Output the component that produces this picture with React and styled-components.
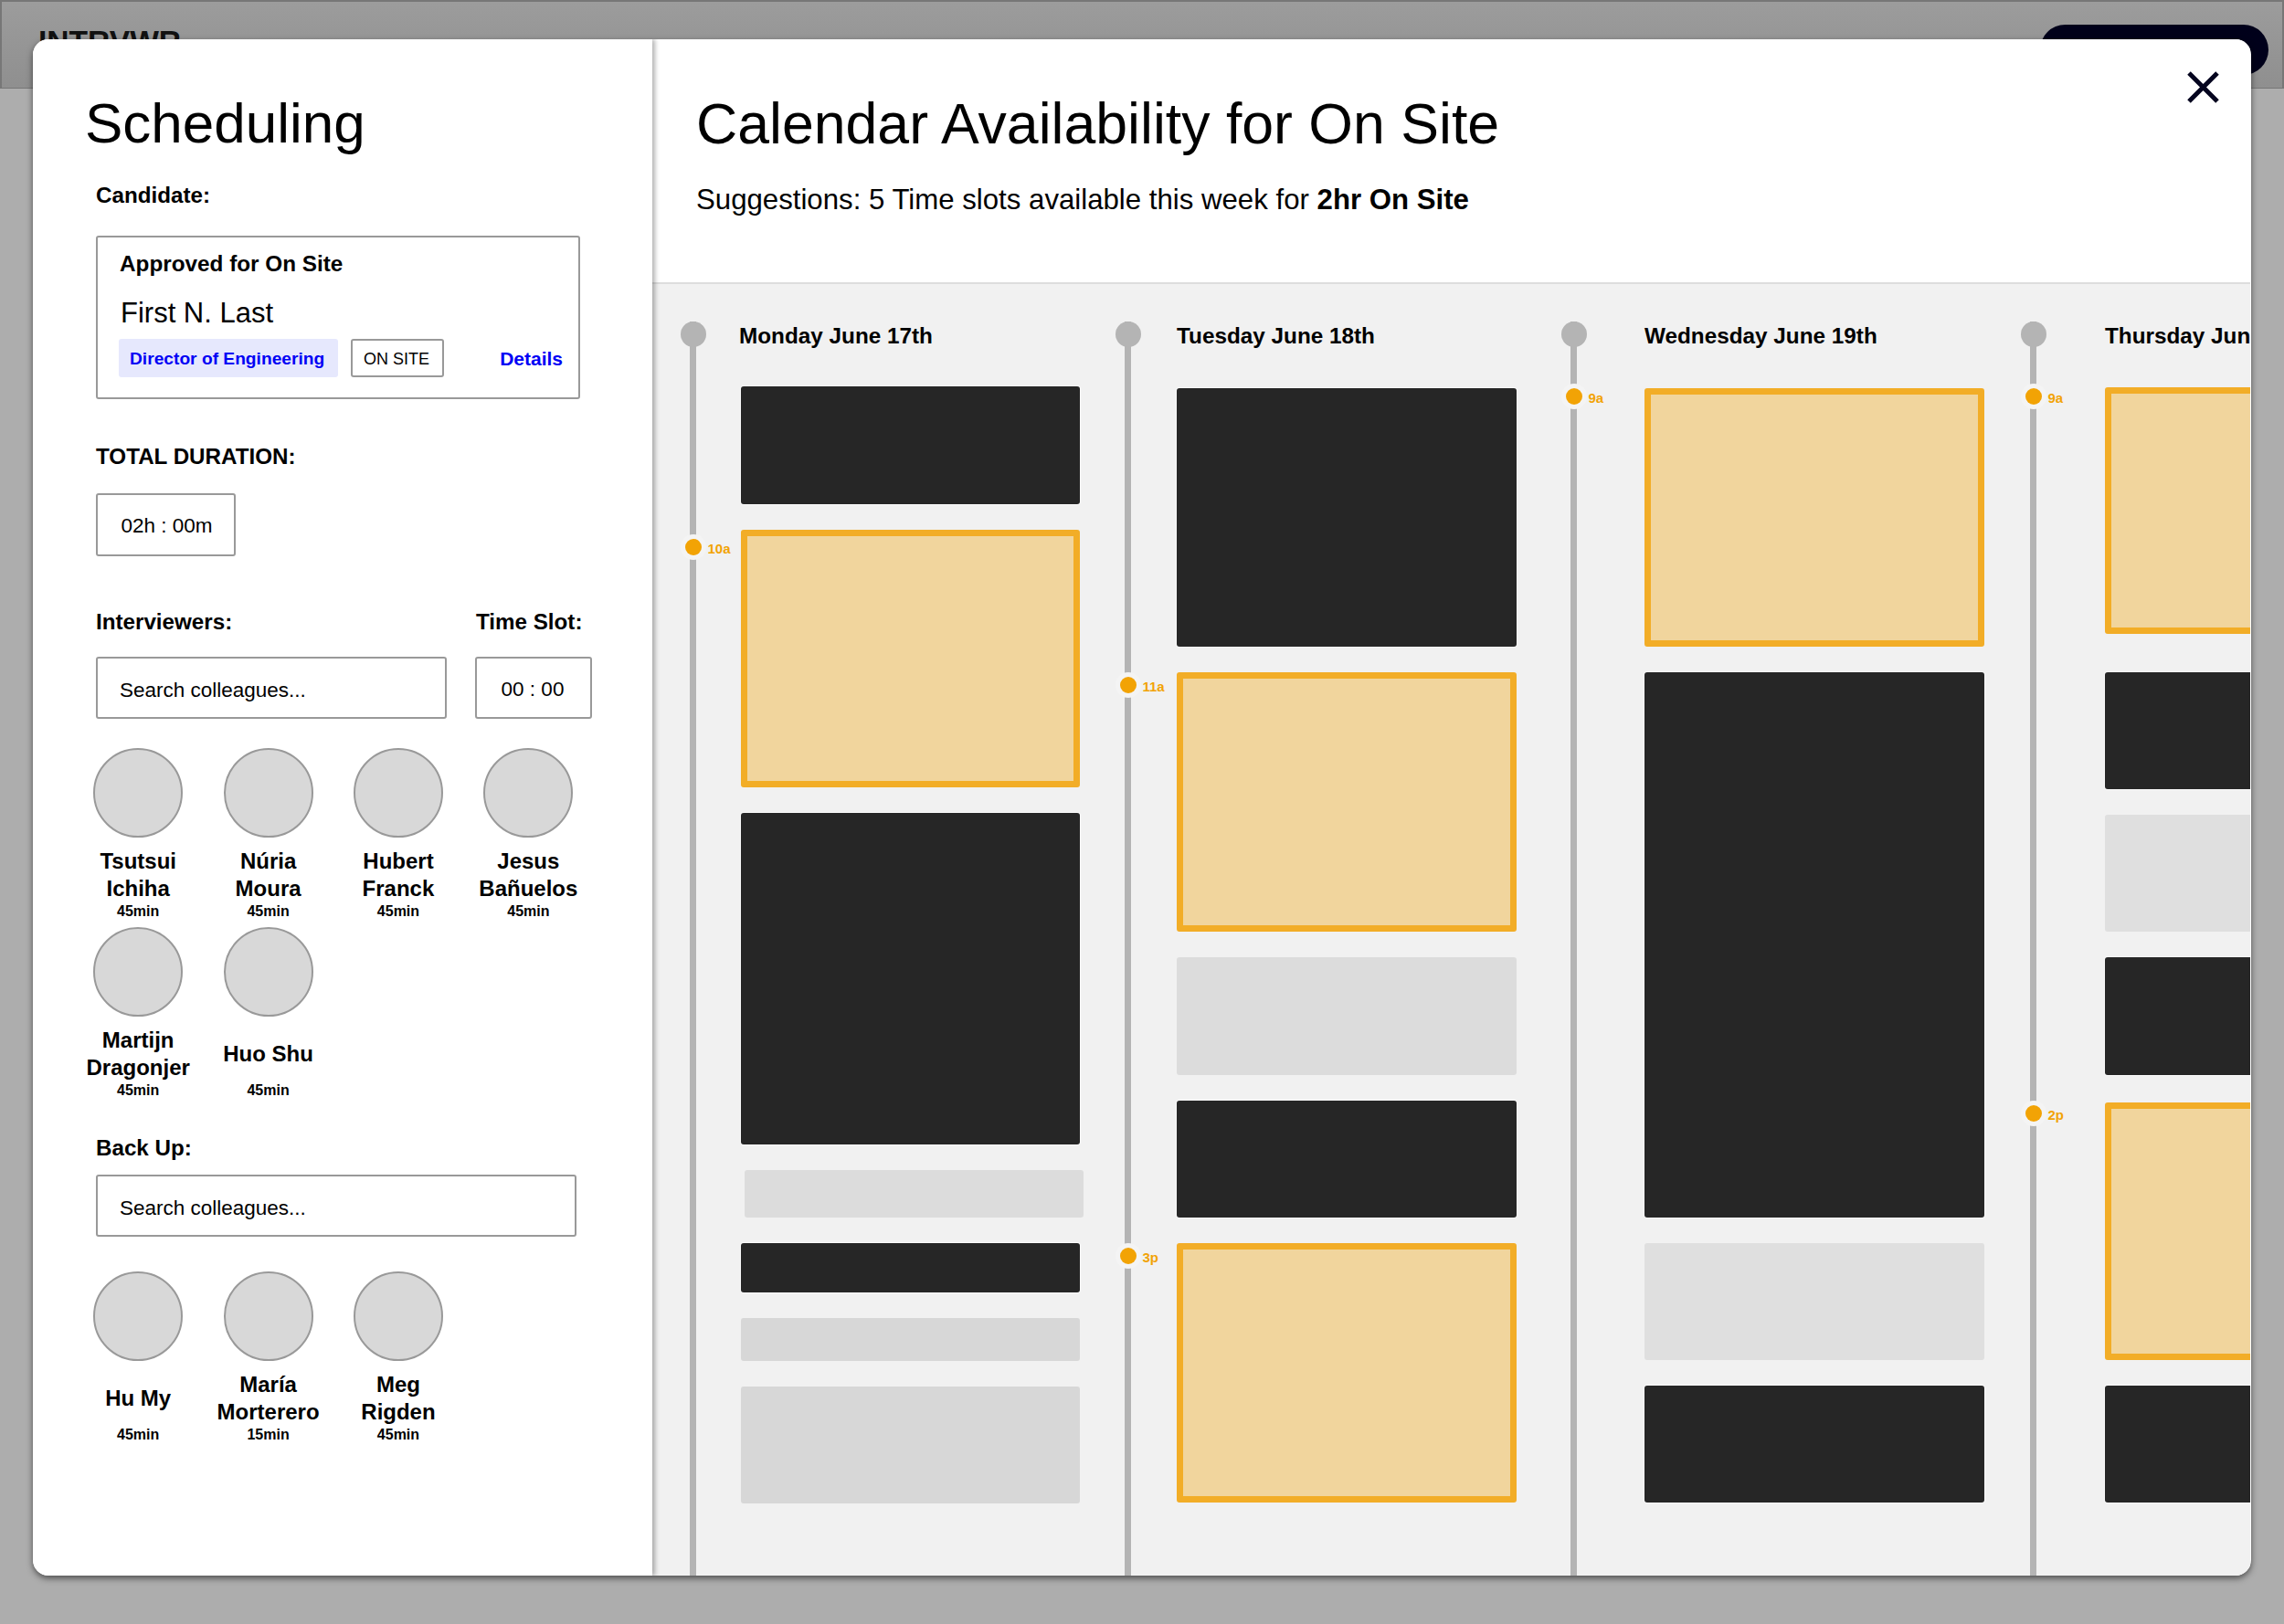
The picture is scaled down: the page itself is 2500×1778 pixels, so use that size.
import styled, { createGlobalStyle } from "styled-components";

const GlobalStyle = createGlobalStyle`
  html, body {
    margin: 0;
    padding: 0;
    background: #adadad;
    font-family: "Liberation Sans", Arial, sans-serif;
    color: #000;
  }
  * {
    box-sizing: border-box;
  }
`;

const interviewers = [
  { name: "Tsutsui Ichiha", time: "45min" },
  { name: "Núria Moura", time: "45min" },
  { name: "Hubert Franck", time: "45min" },
  { name: "Jesus Bañuelos", time: "45min" },
  { name: "Martijn Dragonjer", time: "45min" },
  { name: "Huo Shu", time: "45min" },
];

const backups = [
  { name: "Hu My", time: "45min" },
  { name: "María Morterero", time: "15min" },
  { name: "Meg Rigden", time: "45min" },
];

const days = [
  {
    label: "Monday June 17th",
    labelShift: -2,
    railGap: 49,
    after: 49,
    width: 371,
    top: 39,
    markers: [{ text: "10a", y: 247 }],
    blocks: [
      { kind: "busy", h: 129 },
      { kind: "open", h: 282 },
      { kind: "busy", h: 363 },
      { kind: "soft", h: 52, nudge: 4 },
      { kind: "busy", h: 54 },
      { kind: "mute", h: 47 },
      { kind: "mute", h: 128 },
    ],
  },
  {
    label: "Tuesday June 18th",
    railGap: 50,
    after: 59,
    width: 372,
    top: 41,
    markers: [
      { text: "11a", y: 398 },
      { text: "3p", y: 1023 },
    ],
    blocks: [
      { kind: "busy", h: 283 },
      { kind: "open", h: 284 },
      { kind: "soft", h: 129 },
      { kind: "busy", h: 128 },
      { kind: "open", h: 284 },
    ],
  },
  {
    label: "Wednesday June 19th",
    railGap: 74,
    after: 50,
    width: 372,
    top: 41,
    markers: [{ text: "9a", y: 82 }],
    blocks: [
      { kind: "open", h: 283 },
      { kind: "busy", h: 597 },
      { kind: "pale", h: 128 },
      { kind: "busy", h: 128 },
    ],
  },
  {
    label: "Thursday June 20th",
    railGap: 75,
    after: 0,
    width: 372,
    top: 40,
    markers: [
      { text: "9a", y: 82 },
      { text: "2p", y: 867 },
    ],
    blocks: [
      { kind: "open", h: 270 },
      { kind: "busy", h: 128, extra: 14 },
      { kind: "pale", h: 128 },
      { kind: "busy", h: 129 },
      { kind: "open", h: 282, extra: 2 },
      { kind: "busy", h: 128 },
    ],
  },
];

const People = ({ list }) => (
  <PeopleGrid>
    {list.map((p) => (
      <Person key={p.name}>
        <Avatar />
        <PersonName>
          <span>{p.name}</span>
        </PersonName>
        <PersonTime>{p.time}</PersonTime>
      </Person>
    ))}
  </PeopleGrid>
);

const App = () => {
  return (
    <>
      <GlobalStyle />
      <Page>
        <TopBar>
          <Logo>INTRVWR</Logo>
          <TopButton />
        </TopBar>

        <Modal>
          <Sidebar>
            <SideTitle>Scheduling</SideTitle>
            <SideBody>
              <Label $top={30}>Candidate:</Label>
              <CandidateCard>
                <CardTitle>Approved for On Site</CardTitle>
                <CandidateName>First N. Last</CandidateName>
                <CardRow>
                  <RoleChip>Director of Engineering</RoleChip>
                  <TypeChip>ON SITE</TypeChip>
                  <DetailsLink>Details</DetailsLink>
                </CardRow>
              </CandidateCard>

              <Label $top={49}>TOTAL DURATION:</Label>
              <DurationBox>02h : 00m</DurationBox>

              <SearchGrid>
                <Label>Interviewers:</Label>
                <TimeLabel>Time Slot:</TimeLabel>
                <SearchBox>Search colleagues...</SearchBox>
                <TimeBox>00 : 00</TimeBox>
              </SearchGrid>
              <People list={interviewers} />

              <Label $top={39}>Back Up:</Label>
              <BackupSearch>Search colleagues...</BackupSearch>
              <People list={backups} />
            </SideBody>
          </Sidebar>

          <Main>
            <MainHeader>
              <MainTitle>Calendar Availability for On Site</MainTitle>
              <Suggestion>
                Suggestions: 5 Time slots available this week for <b>2hr On Site</b>
              </Suggestion>
              <CloseButton aria-label="Close">
                <svg width="35" height="35" viewBox="0 0 35 35">
                  <path d="M2 2 L33 33 M33 2 L2 33" stroke="#05051f" strokeWidth="5" fill="none" />
                </svg>
              </CloseButton>
            </MainHeader>

            <Calendar>
              {days.map((day) => (
                <Day key={day.label} $after={day.after}>
                  <Rail>
                    <RailHead />
                    {day.markers.map((m) => (
                      <Marker key={m.text} $y={m.y}>
                        <MarkerDot />
                        <MarkerText>{m.text}</MarkerText>
                      </Marker>
                    ))}
                  </Rail>
                  <DayBody $gap={day.railGap} $width={day.width}>
                    <DayLabel $shift={day.labelShift}>{day.label}</DayLabel>
                    <Blocks $top={day.top}>
                      {day.blocks.map((b, i) => (
                        <Block key={i} $kind={b.kind} $h={b.h} $nudge={b.nudge} $extra={b.extra} />
                      ))}
                    </Blocks>
                  </DayBody>
                </Day>
              ))}
            </Calendar>
          </Main>
        </Modal>
      </Page>
    </>
  );
};

const Page = styled.div`
  position: relative;
  height: 1778px;
  overflow: hidden;
  background: #adadad;
`;

const TopBar = styled.header`
  height: 97px;
  display: flex;
  align-items: flex-start;
  justify-content: space-between;
  padding: 25px 15px 0 40px;
  background: linear-gradient(#9c9c9c, #8f8f8f);
  border: 2px solid #777;
  border-bottom-width: 1px;
`;

const Logo = styled.div`
  margin-top: 2px;
  font-size: 33.6px;
  font-weight: 700;
  line-height: 33px;
  color: #111;
`;

const TopButton = styled.div`
  width: 250px;
  height: 55px;
  border-radius: 28px;
  background: #00001a;
`;

const Modal = styled.div`
  position: absolute;
  top: 43px;
  left: 36px;
  width: 2428px;
  height: 1682px;
  display: flex;
  overflow: hidden;
  background: #fff;
  border-radius: 17px;
  box-shadow: 0 3px 7px rgba(0, 0, 0, 0.55);
`;

const Sidebar = styled.aside`
  position: relative;
  z-index: 2;
  flex: 0 0 678px;
  padding: 57px 0 0 57px;
  background: #fff;
  box-shadow: 3px 0 5px rgba(0, 0, 0, 0.3);
`;

const SideTitle = styled.h1`
  margin: 0;
  font-size: 62px;
  font-weight: 400;
  line-height: 70px;
`;

const SideBody = styled.div`
  padding-left: 12px;
`;

const Label = styled.div`
  margin-top: ${(p) => p.$top || 0}px;
  font-size: 24.2px;
  font-weight: 700;
  line-height: 28px;
`;

const TimeLabel = styled(Label)`
  margin-left: 1px;
`;

const CandidateCard = styled.div`
  width: 530px;
  height: 179px;
  margin-top: 30px;
  padding: 15px 17px 0 24px;
  border: 2px solid #999;
  border-radius: 3px;
`;

const CardTitle = styled.div`
  font-size: 24.3px;
  font-weight: 700;
  line-height: 28px;
`;

const CandidateName = styled.div`
  margin: 22px 0 0 1px;
  font-size: 31px;
  line-height: 36px;
`;

const CardRow = styled.div`
  display: flex;
  align-items: center;
  margin: 10px 0 0 -1px;
`;

const RoleChip = styled.div`
  width: 240px;
  height: 42px;
  padding-left: 12px;
  border-radius: 3px;
  background: #e6e8fd;
  color: #0000f5;
  font-size: 19.2px;
  font-weight: 700;
  line-height: 43px;
`;

const TypeChip = styled.div`
  width: 102px;
  height: 42px;
  margin-left: 14px;
  padding-left: 12px;
  border: 2px solid #999;
  border-radius: 3px;
  font-size: 18px;
  line-height: 40px;
`;

const DetailsLink = styled.a`
  margin-left: auto;
  padding-top: 1px;
  color: #0000f5;
  font-size: 21px;
  font-weight: 700;
`;

const FieldBox = styled.div`
  height: 68px;
  border: 2px solid #999;
  border-radius: 3px;
  font-size: 22.5px;
  line-height: 67px;
`;

const DurationBox = styled(FieldBox)`
  width: 153px;
  height: 69px;
  margin-top: 26px;
  padding-left: 2px;
  text-align: center;
`;

const SearchGrid = styled.div`
  display: grid;
  grid-template-columns: 384px 128px;
  column-gap: 31px;
  row-gap: 24px;
  margin-top: 58px;
`;

const SearchBox = styled(FieldBox)`
  padding: 1px 0 0 24px;
`;

const TimeBox = styled(FieldBox)`
  padding-right: 2px;
  text-align: center;
`;

const BackupSearch = styled(SearchBox)`
  width: 526px;
  margin-top: 15px;
`;

const PeopleGrid = styled.div`
  display: grid;
  grid-template-columns: repeat(4, 142.4px);
  row-gap: 7px;
  margin: 32px 0 0 -25px;
  ${BackupSearch} + & {
    margin-top: 38px;
  }
`;

const Person = styled.div`
  display: flex;
  flex-direction: column;
  align-items: center;
`;

const Avatar = styled.div`
  width: 98px;
  height: 98px;
  border: 2px solid #999;
  border-radius: 50%;
  background: #d8d8d8;
`;

const PersonName = styled.div`
  display: flex;
  align-items: center;
  justify-content: center;
  width: 122px;
  height: 60px;
  margin-top: 11px;
  font-size: 24px;
  font-weight: 700;
  line-height: 30px;
  text-align: center;
`;

const PersonTime = styled.div`
  font-size: 16px;
  font-weight: 700;
  line-height: 20px;
`;

const Main = styled.main`
  flex: 1;
  min-width: 0;
  display: flex;
  flex-direction: column;
  margin-right: 1px;
`;

const MainHeader = styled.div`
  position: relative;
  flex: 0 0 268px;
  padding: 57px 0 0 48px;
  border-bottom: 2px solid #ddd;
  background: #fff;
`;

const MainTitle = styled.h2`
  margin: 0;
  font-size: 62.6px;
  font-weight: 400;
  line-height: 70px;
`;

const Suggestion = styled.div`
  margin-top: 31px;
  font-size: 31.2px;
  line-height: 36px;
`;

const CloseButton = styled.button`
  position: absolute;
  top: 35px;
  right: 34px;
  padding: 0;
  border: 0;
  background: none;
  line-height: 0;
`;

const Calendar = styled.div`
  flex: 1;
  min-height: 0;
  display: flex;
  padding-left: 41px;
  overflow: hidden;
  background: #f1f1f1;
`;

const Day = styled.section`
  flex: none;
  display: flex;
  margin-right: ${(p) => p.$after}px;
`;

const Rail = styled.div`
  position: relative;
  flex: 0 0 7px;
  margin-top: 41px;
  background: #b4b4b4;
`;

const RailHead = styled.div`
  position: absolute;
  top: 0;
  left: -10.5px;
  width: 28px;
  height: 28px;
  border-radius: 50%;
  background: #b4b4b4;
`;

const Marker = styled.div`
  position: absolute;
  top: ${(p) => p.$y - 14}px;
  left: -10.5px;
  width: 28px;
  height: 28px;
  display: flex;
  align-items: center;
  justify-content: center;
  background: #f4f4f4;
  border-radius: 50%;
`;

const MarkerDot = styled.div`
  width: 18px;
  height: 18px;
  border-radius: 50%;
  background: #f2a305;
`;

const MarkerText = styled.span`
  position: absolute;
  left: 30px;
  top: 8px;
  color: #f2a305;
  font-size: 15px;
  font-weight: 700;
  line-height: 16px;
`;

const DayBody = styled.div`
  flex: none;
  width: ${(p) => p.$width}px;
  margin-left: ${(p) => p.$gap}px;
  padding-top: 41px;
`;

const DayLabel = styled.div`
  height: 32px;
  margin-left: ${(p) => p.$shift || 0}px;
  font-size: 24.3px;
  font-weight: 700;
  line-height: 32px;
  white-space: nowrap;
`;

const Blocks = styled.div`
  display: flex;
  flex-direction: column;
  gap: 28px;
  margin-top: ${(p) => p.$top}px;
`;

const blockColors = {
  busy: "background: #262626; box-shadow: 0 0 0 1px #fafafa;",
  open: "background: #f1d59d; border: 7px solid #f2ad27;",
  soft: "background: #dcdcdc;",
  pale: "background: #dfdfdf;",
  mute: "background: #d7d7d7;",
};

const Block = styled.div`
  height: ${(p) => p.$h}px;
  margin-top: ${(p) => p.$extra || 0}px;
  margin-left: ${(p) => p.$nudge || 0}px;
  margin-right: ${(p) => -(p.$nudge || 0)}px;
  border-radius: 3px;
  ${(p) => blockColors[p.$kind]}
`;

export default App;
